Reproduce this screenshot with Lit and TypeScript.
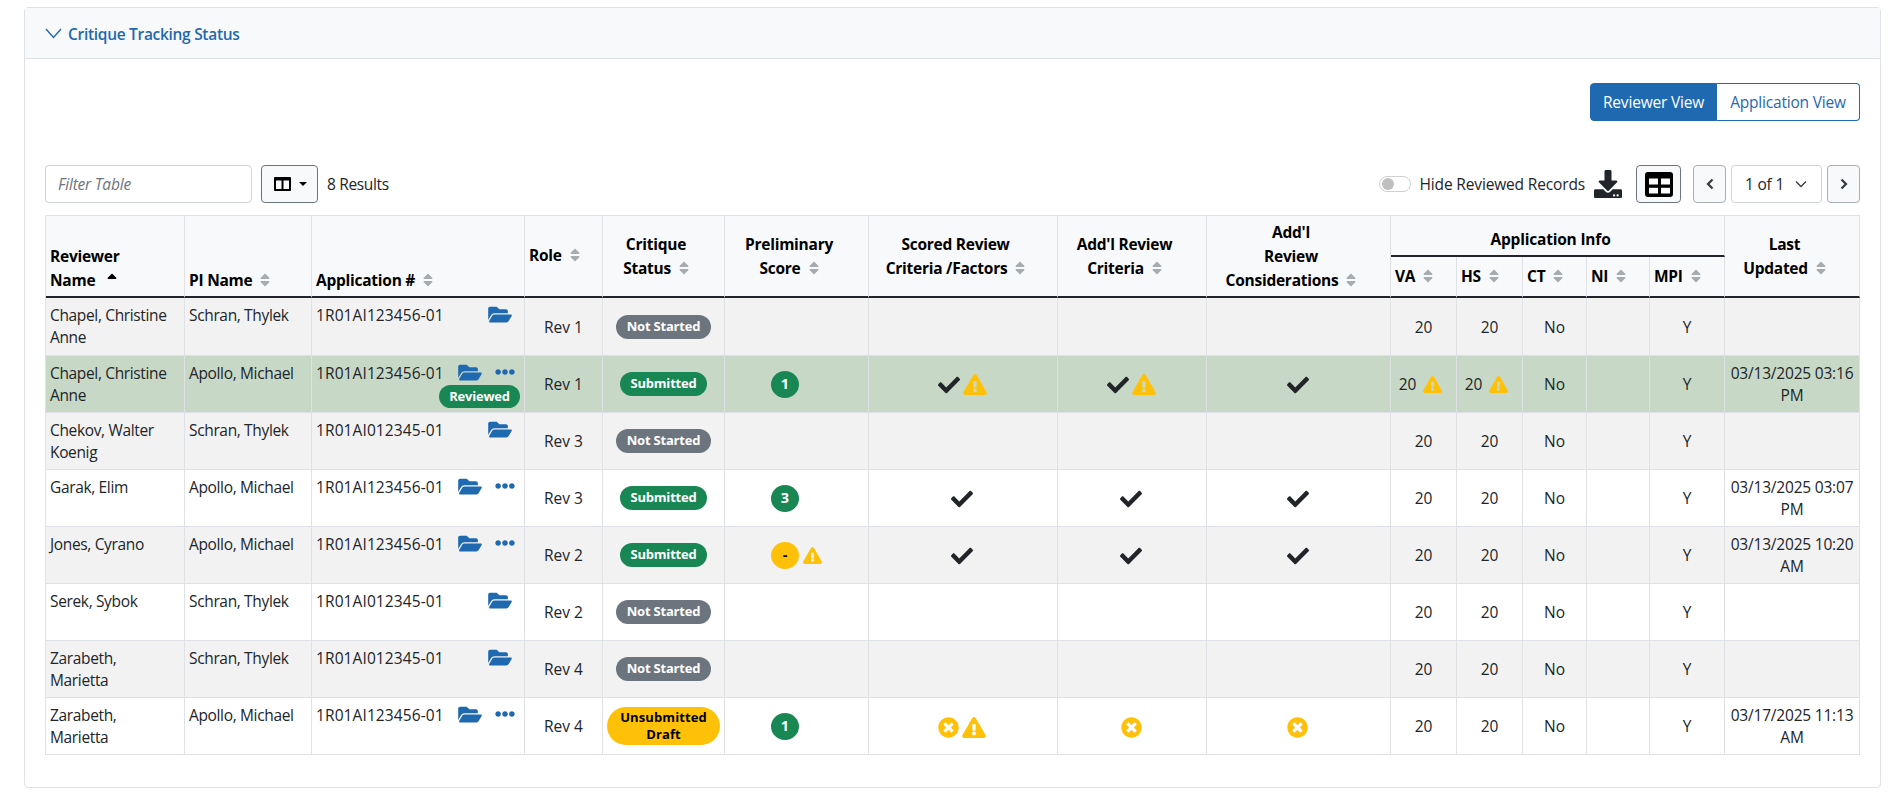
import { LitElement, html, css, svg } from 'lit';
import { customElement } from 'lit/decorators.js';

const sortPath = 'M41 288h238c21.4 0 32.1 25.9 17 41L177 448c-9.4 9.4-24.6 9.4-33.9 0L24 329c-15.1-15.1-4.4-41 17-41zm255-105L177 64c-9.4-9.4-24.6-9.4-33.9 0L24 183c-15.1 15.1-4.4 41 17 41h238c21.4 0 32.1-25.9 17-41z';
const sortUpPath = 'M279 224H41c-21.4 0-32.1-25.9-17-41L143 64c9.4-9.4 24.6-9.4 33.9 0l119 119c15.2 15.1 4.5 41-16.9 41z';
const checkPath = 'M173.898 439.404l-166.4-166.4c-9.997-9.997-9.997-26.206 0-36.204l36.203-36.204c9.997-9.998 26.207-9.998 36.204 0L192 312.69 432.095 72.596c9.997-9.997 26.207-9.997 36.204 0l36.203 36.204c9.997 9.997 9.997 26.206 0 36.204l-294.4 294.401c-9.998 9.997-26.207 9.997-36.204-.001z';
const warnPath = 'M569.517 440.013C587.975 472.007 564.806 512 527.94 512H48.054c-36.937 0-59.999-40.055-41.577-71.987L246.423 23.985c18.467-32.009 64.72-31.951 83.154 0l239.94 416.028zM288 354c-25.405 0-46 20.595-46 46s20.595 46 46 46 46-20.595 46-46-20.595-46-46-46zm-43.673-165.346l7.418 136c.347 6.364 5.609 11.346 11.982 11.346h48.546c6.373 0 11.635-4.982 11.982-11.346l7.418-136c.375-6.874-5.098-12.654-11.982-12.654h-63.383c-6.884 0-12.356 5.78-11.981 12.654z';
const folderPath = 'M572.694 292.093L500.27 416.248A63.997 63.997 0 0 1 444.989 448H45.025c-18.523 0-30.064-20.093-20.731-36.093l72.424-124.155A64 64 0 0 1 152 256h399.964c18.523 0 30.064 20.093 20.73 36.093zM152 224h328v-48c0-26.51-21.49-48-48-48H272l-64-64H48C21.49 64 0 85.49 0 112v278.046l69.077-118.418C86.214 242.25 117.989 224 152 224z';
const xPath = 'M256 8C119 8 8 119 8 256s111 248 248 248 248-111 248-248S393 8 256 8zm121.6 313.1c4.7 4.7 4.7 12.3 0 17L338 377.6c-4.7 4.7-12.3 4.7-17 0L256 312l-65.1 65.6c-4.7 4.7-12.3 4.7-17 0L134.4 338c-4.7-4.7-4.7-12.3 0-17l65.6-65-65.6-65.1c-4.7-4.7-4.7-12.3 0-17l39.6-39.6c4.7-4.7 12.3-4.7 17 0l65 65.7 65.1-65.6c4.7-4.7 12.3-4.7 17 0l39.6 39.6c4.7 4.7 4.7 12.3 0 17L312 256l65.6 65.1z';
const dotsPath = 'M328 256c0 39.8-32.2 72-72 72s-72-32.2-72-72 32.2-72 72-72 72 32.2 72 72zm104-72c-39.8 0-72 32.2-72 72s32.2 72 72 72 72-32.2 72-72-32.2-72-72-72zm-352 0c-39.8 0-72 32.2-72 72s32.2 72 72 72 72-32.2 72-72-32.2-72-72-72z';
const downloadPath = 'M216 0h80c13.3 0 24 10.7 24 24v168h87.7c17.8 0 26.7 21.5 14.1 34.1L269.7 378.3c-7.5 7.5-19.8 7.5-27.3 0L90.1 226.1c-12.6-12.6-3.7-34.1 14.1-34.1H192V24c0-13.3 10.7-24 24-24zm296 376v112c0 13.3-10.7 24-24 24H24c-13.3 0-24-10.7-24-24V376c0-13.3 10.7-24 24-24h146.7l49 49c20.1 20.1 52.5 20.1 72.6 0l49-49H488c13.3 0 24 10.7 24 24zm-124 88c0-11-9-20-20-20s-20 9-20 20 9 20 20 20 20-9 20-20zm64 0c0-11-9-20-20-20s-20 9-20 20 9 20 20 20 20-9 20-20z';

const icon = (cls: string, box: string, d: string) =>
  html`<svg class=${cls} viewBox=${box} fill="currentColor">${svg`<path d=${d}></path>`}</svg>`;

const sort = () => icon('sort', '0 0 320 512', sortPath);
const check = () => icon('check', '0 0 512 512', checkPath);
const warn = () => icon('warn', '0 0 576 512', warnPath);
const warnSm = (hidden = false) => icon(hidden ? 'warn sm ghost' : 'warn sm', '0 0 576 512', warnPath);
const xMark = () => icon('xmark', '0 0 512 512', xPath);

interface Row {
  name: string;
  pi: string;
  app: string;
  role: string;
  status: 'ns' | 'sub' | 'draft';
  score?: string;
  scoreWarn?: boolean;
  scored?: string;
  addl?: string;
  cons?: string;
  warnVa?: boolean;
  updated?: string;
  dots?: boolean;
  reviewed?: boolean;
  cls?: string;
}

const rows: Row[] = [
  { name: 'Chapel, Christine Anne', pi: 'Schran, Thylek', app: '1R01AI123456-01', role: 'Rev 1', status: 'ns', cls: 'gray first' },
  { name: 'Chapel, Christine Anne', pi: 'Apollo, Michael', app: '1R01AI123456-01', role: 'Rev 1', status: 'sub', score: '1', scored: 'cw', addl: 'cw', cons: 'c', warnVa: true, updated: '03/13/2025 03:16 PM', dots: true, reviewed: true, cls: 'green' },
  { name: 'Chekov, Walter Koenig', pi: 'Schran, Thylek', app: '1R01AI012345-01', role: 'Rev 3', status: 'ns', cls: 'gray' },
  { name: 'Garak, Elim', pi: 'Apollo, Michael', app: '1R01AI123456-01', role: 'Rev 3', status: 'sub', score: '3', scored: 'c', addl: 'c', cons: 'c', updated: '03/13/2025 03:07 PM', dots: true },
  { name: 'Jones, Cyrano', pi: 'Apollo, Michael', app: '1R01AI123456-01', role: 'Rev 2', status: 'sub', score: '-', scoreWarn: true, scored: 'c', addl: 'c', cons: 'c', updated: '03/13/2025 10:20 AM', dots: true, cls: 'gray' },
  { name: 'Serek, Sybok', pi: 'Schran, Thylek', app: '1R01AI012345-01', role: 'Rev 2', status: 'ns' },
  { name: 'Zarabeth, Marietta', pi: 'Schran, Thylek', app: '1R01AI012345-01', role: 'Rev 4', status: 'ns', cls: 'gray' },
  { name: 'Zarabeth, Marietta', pi: 'Apollo, Michael', app: '1R01AI123456-01', role: 'Rev 4', status: 'draft', score: '1', scored: 'xw', addl: 'x', cons: 'x', updated: '03/17/2025 11:13 AM', dots: true },
];

const widths = [139, 127, 213, 78, 122, 144, 189, 149, 184, 66, 66, 64, 63, 75, 135];

@customElement('app-root')
export class AppRoot extends LitElement {
  static styles = css`
    :host {
      display: block;
      font-family: 'Open Sans', 'Noto Sans', sans-serif;
      font-size: 15.5px;
      line-height: 22px;
      color: #212529;
    }
    .card {
      margin: 7px 19px 4px 24px;
      border: 1px solid #dee2e6;
      border-radius: 4px;
    }
    .card-head {
      height: 51px;
      box-sizing: border-box;
      display: flex;
      align-items: center;
      gap: 6px;
      padding: 1px 0 0 20px;
      background: #f8f9fa;
      border-bottom: 1px solid #dee2e6;
      color: #1f69b0;
      font-size: 15.5px;
      font-weight: 600;
      letter-spacing: -0.3px;
    }
    .card-head svg { width: 17px; height: 11px; }
    .card-body { padding: 24px 20px 32px; }

    .views { display: flex; justify-content: flex-end; height: 38px; }
    .views button {
      font: inherit;
      letter-spacing: -0.2px;
      box-sizing: border-box;
      height: 38px;
      padding: 0;
      border: 1px solid #1f69b0;
      background: #fff;
      color: #1f69b0;
    }
    .views .on { width: 127px; background: #1f69b0; color: #fff; border-radius: 4px 0 0 4px; }
    .views .off { width: 143px; border-left: 0; border-radius: 0 4px 4px 0; }

    .toolbar { display: flex; align-items: center; height: 38px; margin: 44px 0 12px; }
    .filter {
      box-sizing: border-box;
      width: 207px;
      height: 38px;
      padding-left: 12px;
      display: flex;
      align-items: center;
      border: 1px solid #ced4da;
      border-radius: 4px;
      color: #6c757d;
      font-style: italic;
      letter-spacing: -0.2px;
    }
    .btn {
      box-sizing: border-box;
      height: 38px;
      display: flex;
      align-items: center;
      justify-content: center;
      background: #f8f9fa;
      border: 1px solid #6c757d;
      border-radius: 4px;
      color: #000;
    }
    .col-btn { width: 57px; margin: 0 9px; gap: 8px; justify-content: flex-start; padding-left: 12px; }
    .col-btn .panes { width: 17px; height: 14px; }
    .caret { width: 0; height: 0; border: 4px solid transparent; border-top-color: #000; border-bottom: 0; }
    .count { letter-spacing: -0.35px; }
    .spacer { flex: 1; }
    .switch {
      box-sizing: border-box;
      width: 32px;
      height: 16px;
      padding: 1px 2px;
      border: 1px solid #ccd0d4;
      border-radius: 8px;
      display: flex;
      align-items: center;
    }
    .switch i { width: 12px; height: 12px; border-radius: 50%; background: #bfbfbf; }
    .switch-label { margin: 0 9px; letter-spacing: -0.15px; }
    .download { width: 28px; height: 28px; color: #212529; margin-right: 14px; }
    .grid-btn { width: 45px; margin-right: 12px; }
    .grid-btn svg { width: 28px; height: 25px; }
    .pager { width: 33px; border-color: #a9aeb3; color: #343a40; }
    .pager svg { width: 8px; height: 12px; }
    .page-sel {
      box-sizing: border-box;
      width: 91px;
      height: 38px;
      margin: 0 5px;
      padding-left: 13px;
      display: flex;
      align-items: center;
      gap: 11px;
      border: 1px solid #ced4da;
      border-radius: 4px;
      letter-spacing: -0.2px;
    }
    .page-sel svg { width: 12px; height: 8px; color: #343a40; }

    table {
      width: 1815px;
      table-layout: fixed;
      border-collapse: separate;
      border-spacing: 0;
      border-top: 1px solid #dee2e6;
      border-left: 1px solid #dee2e6;
    }
    th, td {
      box-sizing: border-box;
      border-right: 1px solid #dee2e6;
      border-bottom: 1px solid #dee2e6;
      padding: 4px;
      overflow: hidden;
    }
    th {
      background: #f8f9fa;
      color: #000;
      font-weight: 700;
      line-height: 24px;
      text-align: center;
      vertical-align: middle;
      white-space: nowrap;
      letter-spacing: -0.25px;
      border-bottom: 2px solid #212529;
      padding: 2px 19px 2px 4px;
    }
    th.left { text-align: left; padding: 0 0 2px 4px; }
    th.bottom { vertical-align: bottom; padding-bottom: 4px; }
    th.group { height: 41px; padding: 7px 14px 0 0; letter-spacing: -0.2px; }
    tr.sub th { height: 41px; }
    td {
      height: 57px;
      text-align: center;
      vertical-align: middle;
    }
    tr.first td { height: 58px; }
    td.left { text-align: left; vertical-align: top; letter-spacing: -0.35px; padding: 6px 4px 0; }
    td.name { padding-right: 12px; }
    td.app-cell { padding-top: 2px; }
    td.date { letter-spacing: -0.2px; }
    tr.gray td { background: #f2f2f2; }
    tr.green td { background: #c7d9c6; }

    .sort { width: 10px; height: 16px; margin-left: 8px; color: #a6abb0; vertical-align: -2px; }
    .sort.up { color: #000; }

    .app { display: flex; justify-content: space-between; }
    .app-text { letter-spacing: 0.1px; margin-top: 4px; white-space: nowrap; }
    .tools { display: flex; flex-direction: column; align-items: flex-end; flex: none; margin-left: -10px; }
    .tool-icons { display: flex; align-items: center; height: 16px; margin-top: 6px; color: #1f69b0; padding-right: 8px; }
    .tool-icons.more { padding-right: 5px; }
    .folder { width: 24px; height: 21px; }
    .dots { width: 20px; height: 20px; margin-left: 13px; }

    .badge {
      display: inline-block;
      box-sizing: border-box;
      height: 24px;
      border-radius: 12px;
      color: #fff;
      font-size: 13px;
      font-weight: 700;
      line-height: 23px;
      letter-spacing: -0.2px;
      text-align: center;
      vertical-align: middle;
      white-space: nowrap;
    }
    .ns { background: #6c757d; width: 95px; }
    .sub-b { background: #198754; width: 87px; }
    .draft {
      background: #ffc107;
      color: #000;
      width: 113px;
      height: 38px;
      border-radius: 19px;
      line-height: 17px;
      padding-top: 2px;
      letter-spacing: 0.1px;
      white-space: normal;
    }
    .reviewed { background: #198754; width: 81px; height: 23px; margin-top: 5px; line-height: 22px; }

    .score-wrap { display: inline-flex; align-items: center; gap: 4px; vertical-align: middle; }
    .score {
      display: inline-flex;
      align-items: center;
      justify-content: center;
      width: 28px;
      height: 27px;
      border-radius: 50%;
      background: #198754;
      color: #fff;
      font-size: 14.5px;
      font-weight: 700;
    }
    .score.amber { background: #ffc107; color: #000; }
    .marks { display: inline-flex; align-items: center; justify-content: center; gap: 3px; padding-right: 1.5px; vertical-align: middle; }
    .check { width: 22px; height: 22px; color: #212529; }
    .warn { width: 24px; height: 21px; color: #ffc107; }
    .warn.sm { width: 19px; height: 17px; }
    .ghost { visibility: hidden; }
    .xmark { width: 21px; height: 21px; color: #ffc107; }
    .va { display: inline-flex; align-items: center; gap: 7px; padding-right: 6px; }
  `;

  private marks(kind?: string) {
    if (!kind) return '';
    return html`<span class="marks">
      ${kind.includes('c') ? check() : ''}
      ${kind.includes('x') ? xMark() : ''}
      ${kind.includes('w') ? warn() : ''}
    </span>`;
  }

  private head(label: unknown, cls = '') {
    return html`<th class=${cls} rowspan="2">${label}${sort()}</th>`;
  }

  private renderRow(r: Row) {
    const status =
      r.status === 'ns'
        ? html`<span class="badge ns">Not Started</span>`
        : r.status === 'sub'
          ? html`<span class="badge sub-b">Submitted</span>`
          : html`<span class="badge draft">Unsubmitted Draft</span>`;
    return html`<tr class=${r.cls ?? ''}>
      <td class="left name">${r.name}</td>
      <td class="left">${r.pi}</td>
      <td class="left app-cell">
        <div class="app">
          <span class="app-text">${r.app}</span>
          <div class="tools">
            <div class="tool-icons ${r.dots ? 'more' : ''}">
              ${icon('folder', '0 0 576 512', folderPath)}
              ${r.dots ? icon('dots', '0 0 512 512', dotsPath) : ''}
            </div>
            ${r.reviewed ? html`<span class="badge reviewed">Reviewed</span>` : ''}
          </div>
        </div>
      </td>
      <td>${r.role}</td>
      <td>${status}</td>
      <td>
        ${r.score
          ? html`<span class="score-wrap">
              <span class="score ${r.score === '-' ? 'amber' : ''}">${r.score}</span>
              ${warnSm(!r.scoreWarn)}
            </span>`
          : ''}
      </td>
      <td>${this.marks(r.scored)}</td>
      <td>${this.marks(r.addl)}</td>
      <td>${this.marks(r.cons)}</td>
      <td>${r.warnVa ? html`<span class="va">20 ${warnSm()}</span>` : '20'}</td>
      <td>${r.warnVa ? html`<span class="va">20 ${warnSm()}</span>` : '20'}</td>
      <td>No</td>
      <td></td>
      <td>Y</td>
      <td class="date">${r.updated ?? ''}</td>
    </tr>`;
  }

  render() {
    return html`
      <div class="card">
        <div class="card-head">
          <svg viewBox="0 0 17 11" fill="none" stroke="currentColor" stroke-width="1.4"><path d="M1 1l7.5 8.5L16 1"></path></svg>
          <span>Critique Tracking Status</span>
        </div>
        <div class="card-body">
          <div class="views">
            <button class="on">Reviewer View</button>
            <button class="off">Application View</button>
          </div>
          <div class="toolbar">
            <div class="filter">Filter Table</div>
            <div class="btn col-btn">
              <svg class="panes" viewBox="0 0 17 14"><rect width="17" height="14" rx="1" fill="#000"></rect><rect x="2" y="3.5" width="5.5" height="8.5" fill="#fff"></rect><rect x="9.5" y="3.5" width="5.5" height="8.5" fill="#fff"></rect></svg>
              <span class="caret"></span>
            </div>
            <span class="count">8 Results</span>
            <span class="spacer"></span>
            <span class="switch"><i></i></span>
            <span class="switch-label">Hide Reviewed Records</span>
            ${icon('download', '0 0 512 512', downloadPath)}
            <div class="btn grid-btn">
              <svg viewBox="0 0 28 25"><rect width="28" height="25" rx="3" fill="#000"></rect><rect x="4" y="6.5" width="9" height="6" fill="#fff"></rect><rect x="16" y="6.5" width="9" height="6" fill="#fff"></rect><rect x="4" y="15.8" width="9" height="5.7" fill="#fff"></rect><rect x="16" y="15.8" width="9" height="5.7" fill="#fff"></rect></svg>
            </div>
            <div class="btn pager">
              <svg viewBox="0 0 8 12" fill="none" stroke="currentColor" stroke-width="2.2"><path d="M6.5 1.5L2 6l4.5 4.5"></path></svg>
            </div>
            <div class="page-sel">
              <span>1 of 1</span>
              <svg viewBox="0 0 12 8" fill="none" stroke="currentColor" stroke-width="1.3"><path d="M1 1.5l5 5 5-5"></path></svg>
            </div>
            <div class="btn pager">
              <svg viewBox="0 0 8 12" fill="none" stroke="currentColor" stroke-width="2.2"><path d="M1.5 1.5L6 6l-4.5 4.5"></path></svg>
            </div>
          </div>
          <table>
            <colgroup>
              ${widths.map((w) => html`<col style="width:${w}px" />`)}
            </colgroup>
            <thead>
              <tr>
                <th class="left bottom" rowspan="2">Reviewer<br />Name ${icon('sort up', '0 0 320 512', sortUpPath)}</th>
                ${this.head('PI Name', 'left bottom')}
                ${this.head('Application #', 'left bottom')}
                ${this.head('Role', 'left')}
                ${this.head(html`Critique<br />Status`)}
                ${this.head(html`Preliminary<br />Score`)}
                ${this.head(html`Scored Review<br />Criteria /Factors`)}
                ${this.head(html`Add'l Review<br />Criteria`)}
                ${this.head(html`Add'l<br />Review<br />Considerations`)}
                <th class="group" colspan="5">Application Info</th>
                ${this.head(html`Last<br />Updated`)}
              </tr>
              <tr class="sub">
                ${['VA', 'HS', 'CT', 'NI', 'MPI'].map((h) => html`<th class="left">${h}${sort()}</th>`)}
              </tr>
            </thead>
            <tbody>
              ${rows.map((r) => this.renderRow(r))}
            </tbody>
          </table>
        </div>
      </div>
    `;
  }
}
